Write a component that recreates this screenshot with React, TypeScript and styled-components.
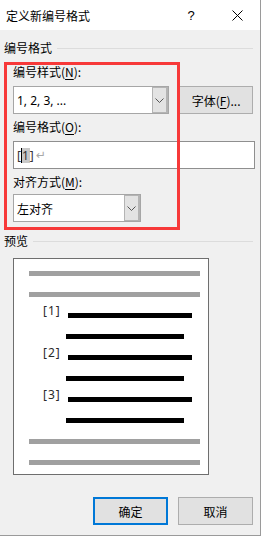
import React from "react";
import styled, { createGlobalStyle } from "styled-components";

const GlobalStyle = createGlobalStyle`
  html, body {
    margin: 0;
    padding: 0;
    background: #ffffff;
  }
  body {
    font-family: "Noto Sans", "Noto Sans CJK SC", sans-serif;
    font-size: 12px;
    color: #000;
  }
`;

const Dialog = styled.div`
  position: relative;
  width: 260px;
  height: 535px;
  background: #f0f0f0;
  border-right: 1px solid #9a9a9a;
  border-bottom: 1px solid #9a9a9a;
  display: flex;
  flex-direction: column;
`;

const TitleBar = styled.div`
  height: 30px;
  background: #fff;
  display: flex;
  align-items: center;
  padding-left: 6px;
  font-family: "Noto Sans CJK SC", sans-serif;
  font-size: 12px;
`;

const Title = styled.div`
  flex: 1;
`;

const TitleButton = styled.div<{ $w: number }>`
  width: ${(p) => p.$w}px;
  display: flex;
  justify-content: center;
  align-items: center;
  font-family: "Liberation Sans", sans-serif;
  font-size: 13px;
`;

const Body = styled.div`
  flex: 1;
  display: flex;
  flex-direction: column;
  padding: 0 7px 0 4px;
  font-family: "Noto Sans CJK SC", sans-serif;
`;

const GroupHeader = styled.div<{ $mt: number }>`
  display: flex;
  align-items: center;
  gap: 5px;
  margin-top: ${(p) => p.$mt}px;
  line-height: 16px;
  height: 16px;

  &::after {
    content: "";
    flex: 1;
    height: 1px;
    background: #dcdcdc;
  }
`;

const Form = styled.div`
  padding-left: 9px;
  display: flex;
  flex-direction: column;
`;

const Label = styled.div<{ $mt: number }>`
  margin-top: ${(p) => p.$mt}px;
  line-height: 16px;
  height: 16px;
  u {
    text-decoration-thickness: 1px;
    text-underline-offset: 2px;
  }
`;

const Row = styled.div<{ $mt: number }>`
  margin-top: ${(p) => p.$mt}px;
  display: flex;
  gap: 10px;
`;

const Combo = styled.div<{ $w: number }>`
  width: ${(p) => p.$w}px;
  height: 28px;
  box-sizing: border-box;
  border: 1px solid #a6a6a6;
  background: #fff;
  display: flex;
`;

const ComboText = styled.div<{ $cjk?: boolean }>`
  flex: 1;
  display: flex;
  align-items: center;
  padding-left: 3px;
  font-family: ${(p) =>
    p.$cjk ? '"Noto Sans CJK SC", sans-serif' : '"Noto Sans", "Noto Sans CJK SC", sans-serif'};
`;

const ComboButton = styled.div`
  width: 16px;
  box-sizing: border-box;
  background: #e3e3e3;
  border: 1px solid #b4b4b4;
  border-right-width: 2px;
  display: flex;
  align-items: center;
  justify-content: center;
`;

const Button = styled.div<{ $w: number; $default?: boolean }>`
  width: ${(p) => p.$w}px;
  height: 28px;
  box-sizing: border-box;
  background: #e1e1e1;
  border: ${(p) => (p.$default ? "2px solid #0078d7" : "1px solid #adadad")};
  display: flex;
  align-items: center;
  justify-content: center;
  font-family: "Noto Sans CJK SC", sans-serif;
  u {
    text-decoration-thickness: 1px;
    text-underline-offset: 2px;
  }
`;

const EditBox = styled.div`
  margin-top: 6px;
  width: 242px;
  height: 28px;
  box-sizing: border-box;
  border: 1px solid #8f8f8f;
  background: #fff;
  display: flex;
  align-items: center;
  padding-left: 3px;
  font-family: "Noto Sans", "Noto Sans CJK SC", sans-serif;
  color: #333;
`;

const Selected = styled.span`
  background: #c8c8c8;
  border-left: 1px solid #000;
  padding-right: 1px;
  line-height: 15px;
`;

const ReturnMark = styled.span`
  color: #a8a8a8;
  margin-left: 2px;
  font-family: "DejaVu Sans", sans-serif;
  font-size: 12px;
`;

const Preview = styled.div`
  margin: 9px 0 0 9px;
  width: 196px;
  height: 217px;
  box-sizing: border-box;
  border: 1px solid #6e6e6e;
  background: #fff;
  padding: 12px 0 0 15px;
  display: flex;
  flex-direction: column;
`;

const Line = styled.div<{ $indent?: number }>`
  height: 5px;
  margin-bottom: 16px;
  display: flex;
  align-items: flex-end;
  padding-left: ${(p) => p.$indent ?? 0}px;
`;

const Bar = styled.div<{ $w: number; $dark?: boolean }>`
  width: ${(p) => p.$w}px;
  height: 5px;
  flex-shrink: 0;
  background: ${(p) => (p.$dark ? "#000" : "#a0a0a0")};
`;

const Num = styled.div`
  width: 39px;
  padding-left: 14px;
  box-sizing: border-box;
  flex-shrink: 0;
  line-height: 14px;
  height: 14px;
  font-family: "Noto Sans", sans-serif;
  font-size: 12px;
  letter-spacing: 1px;
  color: #2a2a2a;
`;

const Footer = styled.div`
  margin-top: 22px;
  display: flex;
  justify-content: flex-end;
  gap: 10px;
`;

const Annotation = styled.div`
  position: absolute;
  left: 4px;
  top: 62px;
  width: 176px;
  height: 168px;
  box-sizing: border-box;
  border: 3px solid #f73939;
  pointer-events: none;
`;

const Chevron = () => (
  <svg width="9" height="5" viewBox="0 0 9 5">
    <polyline points="0.5,0.5 4.5,4.5 8.5,0.5" fill="none" stroke="#555" strokeWidth="1" />
  </svg>
);

const CloseIcon = () => (
  <svg width="11" height="11" viewBox="0 0 11 11">
    <path d="M0.5 0.5 L10.5 10.5 M10.5 0.5 L0.5 10.5" stroke="#000" strokeWidth="1" />
  </svg>
);

const items = [1, 2, 3];

export default function App() {
  return (
    <>
      <GlobalStyle />
      <Dialog>
        <TitleBar>
          <Title>定义新编号格式</Title>
          <TitleButton $w={46}>?</TitleButton>
          <TitleButton $w={46}>
            <CloseIcon />
          </TitleButton>
        </TitleBar>
        <Body>
          <GroupHeader $mt={10}>编号格式</GroupHeader>
          <Form>
            <Label $mt={8}>
              编号样式(<u>N</u>):
            </Label>
            <Row $mt={6}>
              <Combo $w={157}>
                <ComboText>1, 2, 3, ...</ComboText>
                <ComboButton>
                  <Chevron />
                </ComboButton>
              </Combo>
              <Button $w={74}>
                字体(<u>F</u>)...
              </Button>
            </Row>
            <Label $mt={5}>
              编号格式(<u>O</u>):
            </Label>
            <EditBox>
              [<Selected>1</Selected>]<ReturnMark>↵</ReturnMark>
            </EditBox>
            <Label $mt={5}>
              对齐方式(<u>M</u>):
            </Label>
            <Row $mt={4}>
              <Combo $w={128}>
                <ComboText $cjk>左对齐</ComboText>
                <ComboButton>
                  <Chevron />
                </ComboButton>
              </Combo>
            </Row>
          </Form>
          <GroupHeader $mt={11}>预览</GroupHeader>
          <Preview>
            <Line>
              <Bar $w={171} />
            </Line>
            <Line>
              <Bar $w={171} />
            </Line>
            {items.map((n) => (
              <React.Fragment key={n}>
                <Line>
                  <Num>[{n}]</Num>
                  <Bar $w={124} $dark />
                </Line>
                <Line $indent={37}>
                  <Bar $w={118} $dark />
                </Line>
              </React.Fragment>
            ))}
            <Line>
              <Bar $w={171} />
            </Line>
            <Line>
              <Bar $w={171} />
            </Line>
          </Preview>
          <Footer>
            <Button $w={75} $default>
              确定
            </Button>
            <Button $w={75}>取消</Button>
          </Footer>
        </Body>
        <Annotation />
      </Dialog>
    </>
  );
}
